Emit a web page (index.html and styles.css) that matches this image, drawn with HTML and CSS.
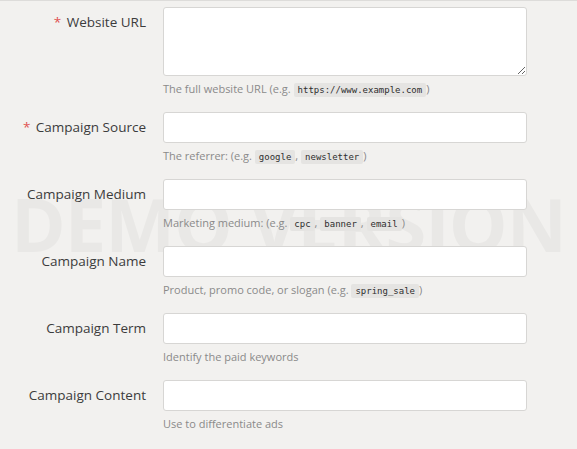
FILE: index.html
```html
<!DOCTYPE html>
<html lang="en">
<head>
<meta charset="utf-8">
<title>Campaign URL Builder</title>
<link rel="stylesheet" href="styles.css">
</head>
<body>
<div class="page">
  <div class="watermark" aria-hidden="true">DEMO VERSION</div>
  <form class="form">
    <div class="row">
      <label class="label" for="url"><span class="req">*</span> Website URL</label>
      <div class="field">
        <textarea id="url" class="textarea"></textarea>
        <div class="help">The full website URL (e.g. <code>https://www.example.com</code>)</div>
      </div>
    </div>
    <div class="row">
      <label class="label" for="src"><span class="req">*</span> Campaign Source</label>
      <div class="field">
        <input id="src" class="input" type="text">
        <div class="help">The referrer: (e.g. <code>google</code>, <code>newsletter</code>)</div>
      </div>
    </div>
    <div class="row">
      <label class="label" for="med">Campaign Medium</label>
      <div class="field">
        <input id="med" class="input" type="text">
        <div class="help">Marketing medium: (e.g. <code>cpc</code>, <code>banner</code>, <code>email</code>)</div>
      </div>
    </div>
    <div class="row">
      <label class="label" for="name">Campaign Name</label>
      <div class="field">
        <input id="name" class="input" type="text">
        <div class="help">Product, promo code, or slogan (e.g. <code>spring_sale</code>)</div>
      </div>
    </div>
    <div class="row">
      <label class="label" for="term">Campaign Term</label>
      <div class="field">
        <input id="term" class="input" type="text">
        <div class="help">Identify the paid keywords</div>
      </div>
    </div>
    <div class="row">
      <label class="label" for="content">Campaign Content</label>
      <div class="field">
        <input id="content" class="input" type="text">
        <div class="help">Use to differentiate ads</div>
      </div>
    </div>
  </form>
</div>
</body>
</html>
```

FILE: styles.css
```css
html {
  background: #f2f1ef;
}

body {
  margin: 0;
  padding: 0;
  font-family: "Open Sans", "Noto Sans", sans-serif;
  color: #444;
}

.page {
  position: relative;
  border-top: 1px solid #dddcda;
  min-height: 448px;
}

.watermark {
  position: absolute;
  left: 0;
  right: 0;
  top: 173px;
  z-index: -1;
  text-align: center;
  font-family: "Open Sans", sans-serif;
  font-weight: 700;
  font-size: 74px;
  line-height: 100px;
  letter-spacing: -1px;
  color: #e9e8e6;
  white-space: nowrap;
}

.form {
  padding-top: 6px;
}

.row {
  display: grid;
  grid-template-columns: 146px 364px;
  column-gap: 17px;
  margin-bottom: 15px;
}

.label {
  text-align: right;
  font-size: 13.5px;
  line-height: 18px;
  padding-top: 6px;
  color: #3c3c3c;
  white-space: nowrap;
}

.req {
  color: #e05252;
  margin-right: 2px;
}

.field {
  display: flex;
  flex-direction: column;
}

.textarea,
.input {
  box-sizing: border-box;
  width: 364px;
  margin: 0;
  border: 1px solid #d7d6d4;
  border-radius: 3px;
  background: #fff;
  font-family: inherit;
  font-size: 13px;
  padding: 5px 8px;
  outline: none;
}

.textarea {
  height: 69px;
  display: block;
}

.input {
  height: 31px;
}

.help {
  margin-top: 5px;
  height: 16px;
  font-size: 11px;
  line-height: 16px;
  color: #8a8a8a;
  white-space: nowrap;
}

.help code {
  font-family: "DejaVu Sans Mono", "Liberation Mono", monospace;
  font-size: 9px;
  line-height: 1;
  color: #2e2e2e;
  background: #e5e4e2;
  border-radius: 2px;
  padding: 2px 4px;
}
```
